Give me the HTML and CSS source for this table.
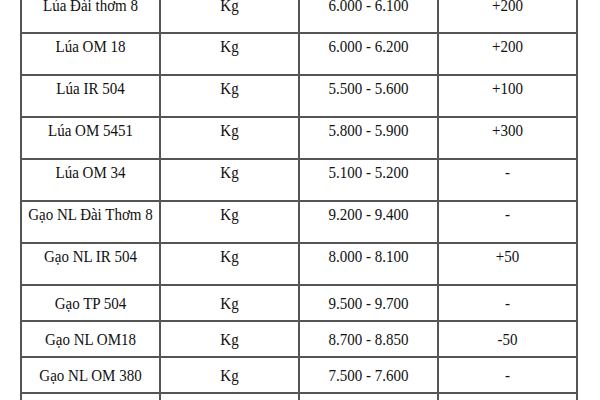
FILE: index.html
```html
<!DOCTYPE html>
<html lang="vi">
<head>
<meta charset="utf-8">
<title>Giá lúa gạo</title>
<link rel="stylesheet" href="styles.css">
</head>
<body>
<div class="sheet">
<table class="prices">
<tr class="tall first"><td><span>Lúa Đài thơm 8</span></td><td><span>Kg</span></td><td><span>6.000 - 6.100</span></td><td><span>+200</span></td></tr>
<tr class="tall"><td><span>Lúa OM 18</span></td><td><span>Kg</span></td><td><span>6.000 - 6.200</span></td><td><span>+200</span></td></tr>
<tr class="tall"><td><span>Lúa IR 504</span></td><td><span>Kg</span></td><td><span>5.500 - 5.600</span></td><td><span>+100</span></td></tr>
<tr class="tall"><td><span>Lúa OM 5451</span></td><td><span>Kg</span></td><td><span>5.800 - 5.900</span></td><td><span>+300</span></td></tr>
<tr class="tall"><td><span>Lúa OM 34</span></td><td><span>Kg</span></td><td><span>5.100 - 5.200</span></td><td><span>-</span></td></tr>
<tr class="tall"><td><span>Gạo NL Đài Thơm 8</span></td><td><span>Kg</span></td><td><span>9.200 - 9.400</span></td><td><span>-</span></td></tr>
<tr class="tall"><td><span>Gạo NL IR 504</span></td><td><span>Kg</span></td><td><span>8.000 - 8.100</span></td><td><span>+50</span></td></tr>
<tr class="short"><td><span>Gạo TP 504</span></td><td><span>Kg</span></td><td><span>9.500 - 9.700</span></td><td><span>-</span></td></tr>
<tr class="short"><td><span>Gạo NL OM18</span></td><td><span>Kg</span></td><td><span>8.700 - 8.850</span></td><td><span>-50</span></td></tr>
<tr class="short"><td><span>Gạo NL OM 380</span></td><td><span>Kg</span></td><td><span>7.500 - 7.600</span></td><td><span>-</span></td></tr>
<tr class="short"><td><span>Gạo TP OM 380</span></td><td><span>Kg</span></td><td><span>7.800 - 8.000</span></td><td><span>-</span></td></tr>
</table>
</div>
</body>
</html>
```
FILE: styles.css
```css
html, body {
  margin: 0;
  padding: 0;
  background: #ffffff;
}
.sheet {
  width: 600px;
  height: 400px;
  overflow: hidden;
}
.prices {
  border-collapse: collapse;
  margin-top: -9px;
  margin-left: 20px;
  width: 558px;
  table-layout: fixed;
  font-family: "Liberation Serif", "Times New Roman", serif;
  font-size: 15px;
  color: #111111;
}
.prices td {
  border: 2px solid #555555;
  text-align: center;
  padding: 0 2px;
  line-height: 17px;
  white-space: nowrap;
}
.prices td span {
  display: inline-block;
  transform: scaleY(1.14);
}
.prices tr.tall td {
  height: 42px;
  vertical-align: top;
  padding-top: 4px;
  box-sizing: border-box;
}
.prices tr.first td {
  height: 41px;
}
.prices tr.short td {
  height: 36px;
  vertical-align: middle;
  box-sizing: border-box;
}
```
